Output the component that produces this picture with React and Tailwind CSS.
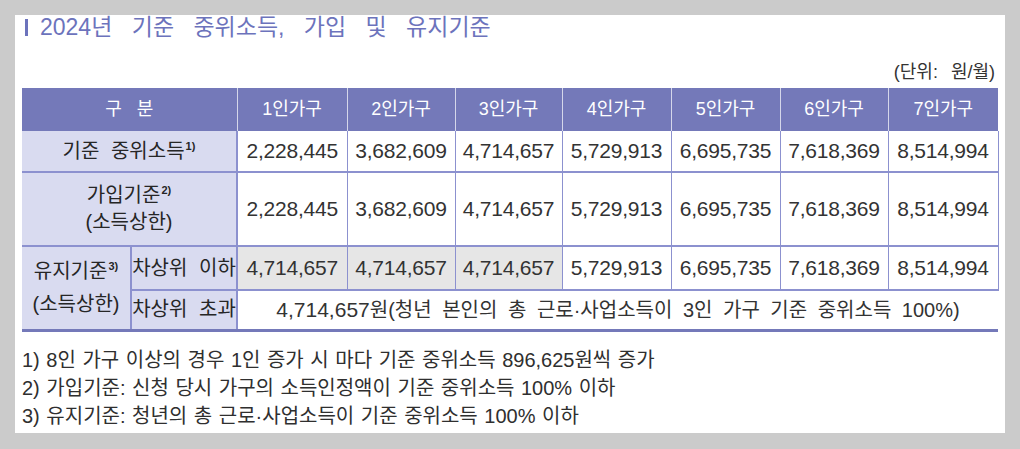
import React from "react";

const FONT = { fontFamily: '"Liberation Sans", "Noto Sans CJK KR", sans-serif' };

const COLS = ["1인가구", "2인가구", "3인가구", "4인가구", "5인가구", "6인가구", "7인가구"];
const BASE = ["2,228,445", "3,682,609", "4,714,657", "5,729,913", "6,695,735", "7,618,369", "8,514,994"];
const KEEP = ["4,714,657", "4,714,657", "4,714,657", "5,729,913", "6,695,735", "7,618,369", "8,514,994"];
const WIDTHS = [109, 106, 110, 108, 107, 109, 109, 108, 110];

const label = "bg-[#d9dbf0] text-[20px] text-[#262626] border-2 border-[#8c91cf] text-center whitespace-nowrap leading-[27px] [word-spacing:6px]";
const num = "text-[21px] text-[#333] border-2 border-[#8c91cf] border-l-[1.5px] border-r-[1.5px] text-center tracking-[-0.2px]";

function Sup({ n }) {
  return <sup className="text-[11px] font-semibold relative -top-[8px] ml-[1px]">{n})</sup>;
}

export default function App() {
  return (
    <div className="bg-[#cbcbcb] w-[1020px] h-[449px] pt-[15px] pl-[15px]" style={FONT}>
      <div className="bg-white w-[990px] h-[418px] px-[7px] relative overflow-hidden">
        <div className="flex items-center h-[26px] -mt-[1px] text-[#6c73bc] text-[23px] [word-spacing:13px]">
          <span className="w-[3px] h-[17px] bg-[#6c73bc] ml-[3px] mr-[12px]" />
          <span>2024년 기준 중위소득, 가입 및 유지기준</span>
        </div>

        <div className="text-right text-[18px] text-[#333] mt-[22px] pr-[3px] leading-[20px] [word-spacing:8px]">
          (단위: 원/월)
        </div>

        <table className="border-collapse table-fixed w-[976px] mt-[6px]">
          <colgroup>
            {WIDTHS.map((w, i) => <col key={i} style={{ width: w }} />)}
          </colgroup>
          <thead>
            <tr className="h-[43px] bg-[#7479b9] text-white text-[18px]">
              <th colSpan={2} className="font-normal text-center [word-spacing:10px] border-r border-white/70">구 분</th>
              {COLS.map((c, i) => (
                <th key={c} className={`font-normal text-center ${i < 6 ? "border-r border-white/70" : ""}`}>{c}</th>
              ))}
            </tr>
          </thead>
          <tbody>
            <tr className="h-[41px]">
              <td colSpan={2} className={`${label} border-l-0 border-t-0`}>기준 중위소득<Sup n="1" /></td>
              {BASE.map((v, i) => (
                <td key={i} className={`${num} border-t-0 ${i === 6 ? "border-r-0" : ""}`}>{v}</td>
              ))}
            </tr>
            <tr className="h-[74px]">
              <td colSpan={2} className={`${label} border-l-0`}>
                가입기준<Sup n="2" /><br />(소득상한)
              </td>
              {BASE.map((v, i) => (
                <td key={i} className={`${num} ${i === 6 ? "border-r-0" : ""}`}>{v}</td>
              ))}
            </tr>
            <tr className="h-[44px]">
              <td rowSpan={2} className={`${label} border-l-0 border-b-[3px] border-b-[#7479b9] leading-[33px]`}>
                유지기준<Sup n="3" /><br />(소득상한)
              </td>
              <td className={`${label} [word-spacing:3px]`}>차상위 이하</td>
              {KEEP.map((v, i) => (
                <td key={i} className={`${num} ${i < 3 ? "bg-[#e6e6e6]" : ""} ${i === 6 ? "border-r-0" : ""}`}>{v}</td>
              ))}
            </tr>
            <tr className="h-[40px]">
              <td className={`${label} [word-spacing:3px] border-b-[3px] border-b-[#7479b9]`}>차상위 초과</td>
              <td colSpan={7} className="text-center text-[20px] text-[#333] border-2 border-r-0 border-[#8c91cf] border-b-[3px] border-b-[#7479b9] [word-spacing:5px]">
                <span className="text-[21px]">4,714,657</span>원(청년 본인의 총 근로·사업소득이 3인 가구 기준 중위소득 100%)
              </td>
            </tr>
          </tbody>
        </table>

        <div className="mt-[14px] text-[20px] text-[#2f2f2f] leading-[28px] [word-spacing:1px]">
          <div>1) 8인 가구 이상의 경우 1인 증가 시 마다 기준 중위소득 896,625원씩 증가</div>
          <div>2) 가입기준: 신청 당시 가구의 소득인정액이 기준 중위소득 100% 이하</div>
          <div>3) 유지기준: 청년의 총 근로·사업소득이 기준 중위소득 100% 이하</div>
        </div>
      </div>
    </div>
  );
}
